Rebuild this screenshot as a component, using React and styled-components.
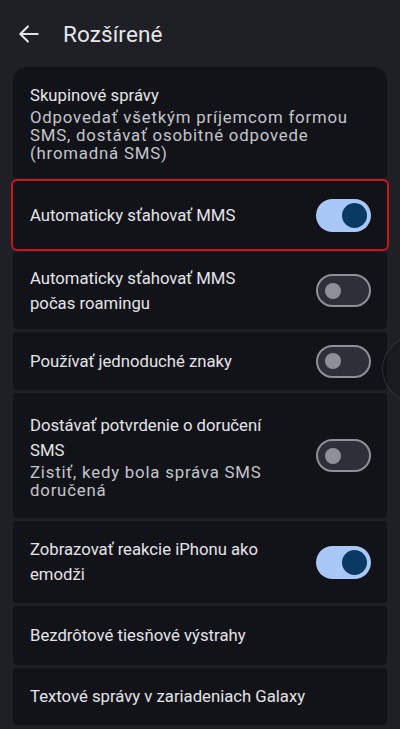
import React from 'react';
import styled, { createGlobalStyle } from 'styled-components';

const GlobalStyle = createGlobalStyle`
  html, body {
    margin: 0;
    padding: 0;
    background: #1e2025;
  }
  body {
    font-family: Roboto, "Noto Sans", sans-serif;
    -webkit-font-smoothing: antialiased;
  }
`;

const Screen = styled.div`
  width: 400px;
  height: 729px;
  overflow: hidden;
  position: relative;
  background: #1e2025;
`;

const TopBar = styled.div`
  height: 67px;
  display: flex;
  align-items: center;
  padding-left: 16px;
  box-sizing: border-box;
`;

const BackButton = styled.div`
  width: 26px;
  height: 26px;
  display: flex;
  margin-top: 1px;
  margin-right: 21px;
  color: #e4e4e8;
`;

const Title = styled.h1`
  margin: 0;
  font-size: 22.5px;
  font-weight: 400;
  color: #e6e6ea;
  letter-spacing: 0.1px;
`;

const List = styled.div`
  margin: 0 13px;
  display: flex;
  flex-direction: column;
  gap: 3px;
`;

const Item = styled.div`
  display: flex;
  align-items: center;
  justify-content: space-between;
  background: #121318;
  padding: ${(p) => p.$pad}px 16px ${(p) => p.$pad}px 17px;
  border-radius: ${(p) => (p.$first ? '14px 14px 4px 4px' : '4px')};
  ${(p) => p.$marked && 'outline: 2px solid #c8151f; outline-offset: 0;'}
`;

const Texts = styled.div`
  flex: 1;
  min-width: 0;
  max-width: ${(p) => (p.$narrow ? '246px' : 'none')};
`;

const Label = styled.div`
  font-size: 16.7px;
  line-height: 25px;
  color: #e4e4e8;
`;

const Sub = styled.div`
  font-size: 16.8px;
  line-height: 18px;
  letter-spacing: 0.8px;
  color: #c3c5cb;
`;

const Track = styled.div`
  flex: none;
  width: 55px;
  height: 33px;
  box-sizing: border-box;
  border-radius: 17px;
  display: flex;
  align-items: center;
  justify-content: ${(p) => (p.$on ? 'flex-end' : 'flex-start')};
  padding: 0 ${(p) => (p.$on ? 4 : 7)}px;
  background: ${(p) => (p.$on ? '#a8c8f8' : '#2f3037')};
  border: ${(p) => (p.$on ? 'none' : '2px solid #8e9098')};
`;

const Thumb = styled.div`
  width: ${(p) => (p.$on ? 25 : 16)}px;
  height: ${(p) => (p.$on ? 25 : 16)}px;
  border-radius: 50%;
  background: ${(p) => (p.$on ? '#0a3961' : '#8e9098')};
`;

const EdgeHandle = styled.div`
  position: absolute;
  left: 382px;
  top: 336px;
  width: 64px;
  height: 64px;
  border-radius: 50%;
  border: 1px solid rgba(255, 255, 255, 0.1);
  background: rgba(18, 19, 24, 0.35);
`;

const Toggle = ({ on }) => (
  <Track $on={on}>
    <Thumb $on={on} />
  </Track>
);

const rows = [
  {
    title: 'Skupinové správy',
    sub: 'Odpovedať všetkým príjemcom formou SMS, dostávať osobitné odpovede (hromadná SMS)',
    first: true,
    pad: 16,
  },
  { title: 'Automaticky sťahovať MMS', toggle: true, on: true, marked: true, pad: 17.5 },
  { title: 'Automaticky sťahovať MMS počas roamingu', toggle: true, pad: 13.5 },
  { title: 'Používať jednoduché znaky', toggle: true, pad: 12.5 },
  {
    title: 'Dostávať potvrdenie o doručení SMS',
    sub: 'Zistiť, kedy bola správa SMS doručená',
    toggle: true,
    pad: 19.5,
  },
  { title: 'Zobrazovať reakcie iPhonu ako emodži', toggle: true, on: true, pad: 16 },
  { title: 'Bezdrôtové tiesňové výstrahy', pad: 17 },
  { title: 'Textové správy v zariadeniach Galaxy', pad: 16 },
];

export default function App() {
  return (
    <Screen>
      <GlobalStyle />
      <TopBar>
        <BackButton>
          <svg width="26" height="26" viewBox="0 0 24 24" fill="none" stroke="currentColor" strokeWidth="1.9" strokeLinecap="round" strokeLinejoin="round">
            <path d="M20 12H4.5" />
            <path d="M11 5l-7 7 7 7" />
          </svg>
        </BackButton>
        <Title>Rozšírené</Title>
      </TopBar>
      <List>
        {rows.map((r) => (
          <Item key={r.title} $first={r.first} $marked={r.marked} $pad={r.pad}>
            <Texts $narrow={r.toggle}>
              <Label>{r.title}</Label>
              {r.sub && <Sub>{r.sub}</Sub>}
            </Texts>
            {r.toggle && <Toggle on={r.on} />}
          </Item>
        ))}
      </List>
      <EdgeHandle />
    </Screen>
  );
}
